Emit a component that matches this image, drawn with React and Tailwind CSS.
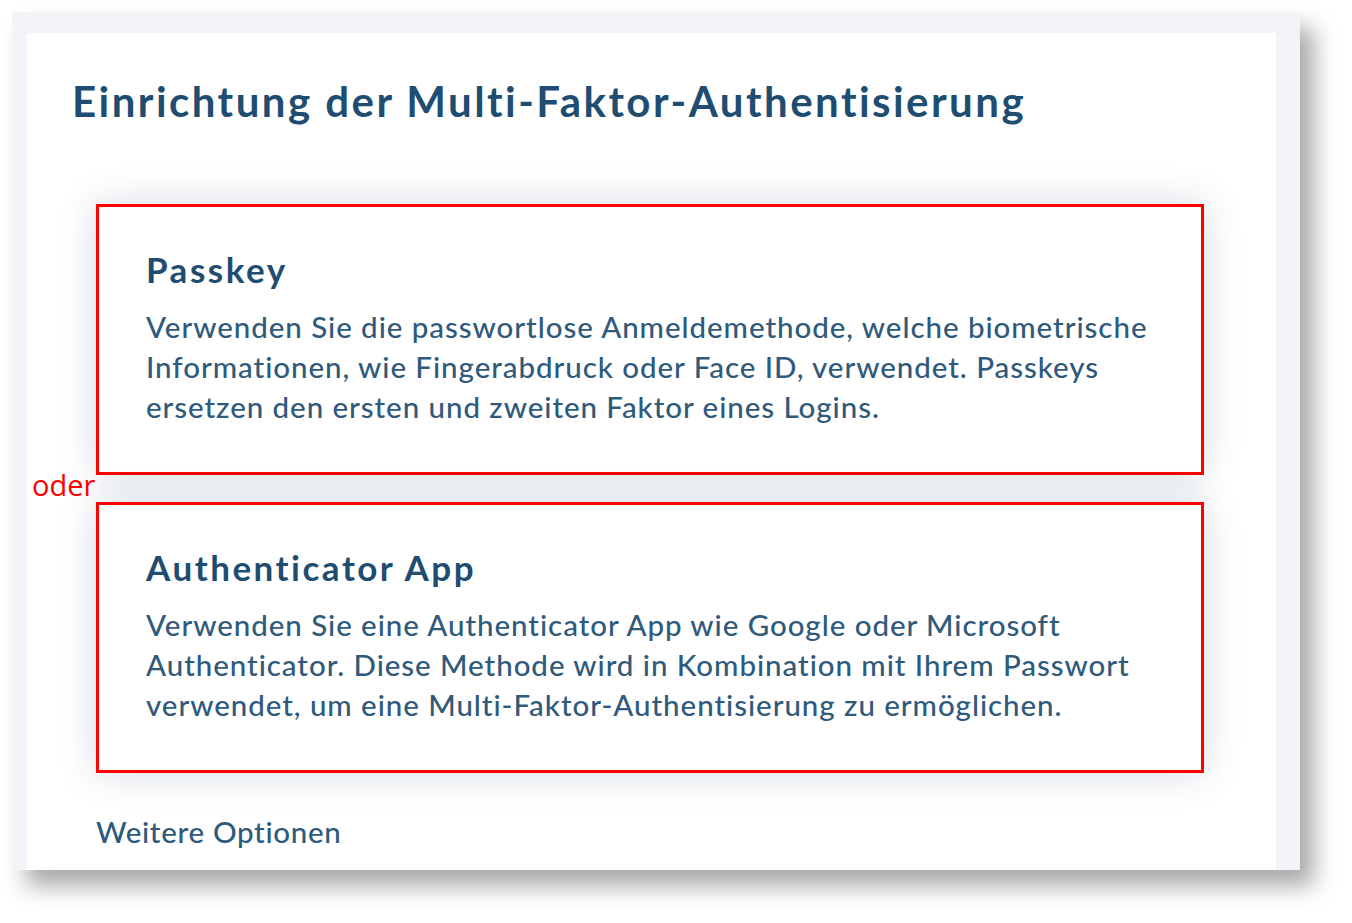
import React from 'react'

const methods = [
  {
    id: 'passkey',
    title: 'Passkey',
    lines: [
      'Verwenden Sie die passwortlose Anmeldemethode, welche biometrische',
      'Informationen, wie Fingerabdruck oder Face ID, verwendet. Passkeys',
      'ersetzen den ersten und zweiten Faktor eines Logins.',
    ],
  },
  {
    id: 'totp',
    title: 'Authenticator App',
    lines: [
      'Verwenden Sie eine Authenticator App wie Google oder Microsoft',
      'Authenticator. Diese Methode wird in Kombination mit Ihrem Passwort',
      'verwendet, um eine Multi-Faktor-Authentisierung zu ermöglichen.',
    ],
  },
]

function MethodCard({ title, lines }) {
  return (
    <div className="h-[271px] border-[3px] border-[#ff0000] bg-white pl-[47px] pt-[41px] shadow-[0_0_36px_rgba(40,70,110,0.2)]">
      <h2 className="text-[35px] leading-[42px] font-bold tracking-[2.5px] text-[#1f4d71]">{title}</h2>
      <p className="mt-[17px] text-[29.5px] leading-[40px] font-medium tracking-[0.95px] text-[#2f5a7b]">
        {lines.map((l, i) => (
          <span key={i} className="block whitespace-nowrap">{l}</span>
        ))}
      </p>
    </div>
  )
}

export default function App() {
  return (
    <div className="min-h-screen bg-white pt-3 pl-3 [font-variant-ligatures:none]" style={{ fontFamily: 'Lato, "Noto Sans", sans-serif' }}>
      {/* ── Screenshot frame ── */}
      <div className="w-[1288px] h-[858px] bg-[#f3f4f7] pt-[21px] pl-[15px] pr-[24px] shadow-[14px_16px_22px_rgba(0,0,0,0.34)]">
        <div className="relative h-full bg-white pl-[45px] pt-[43px]">
          <h1 className="text-[42px] leading-[50px] font-bold tracking-[2.45px] text-[#1f4d71] whitespace-nowrap">
            Einrichtung der Multi-Faktor-Authentisierung
          </h1>

          {/* ── Methods ── */}
          <div className="ml-[24px] mt-[78px] w-[1108px] flex flex-col gap-[27px]">
            {methods.map(m => (
              <MethodCard key={m.id} title={m.title} lines={m.lines} />
            ))}
          </div>

          <p className="ml-[24px] mt-[39px] text-[29.5px] leading-[40px] font-medium tracking-[0.7px] text-[#2f5a7b]">
            Weitere Optionen
          </p>

          {/* annotation */}
          <span
            className="absolute left-[5px] top-[437px] text-[29px] leading-[30px] text-[#ff0000]"
            style={{ fontFamily: '"Open Sans", "Noto Sans", sans-serif' }}
          >
            oder
          </span>
        </div>
      </div>
    </div>
  )
}
